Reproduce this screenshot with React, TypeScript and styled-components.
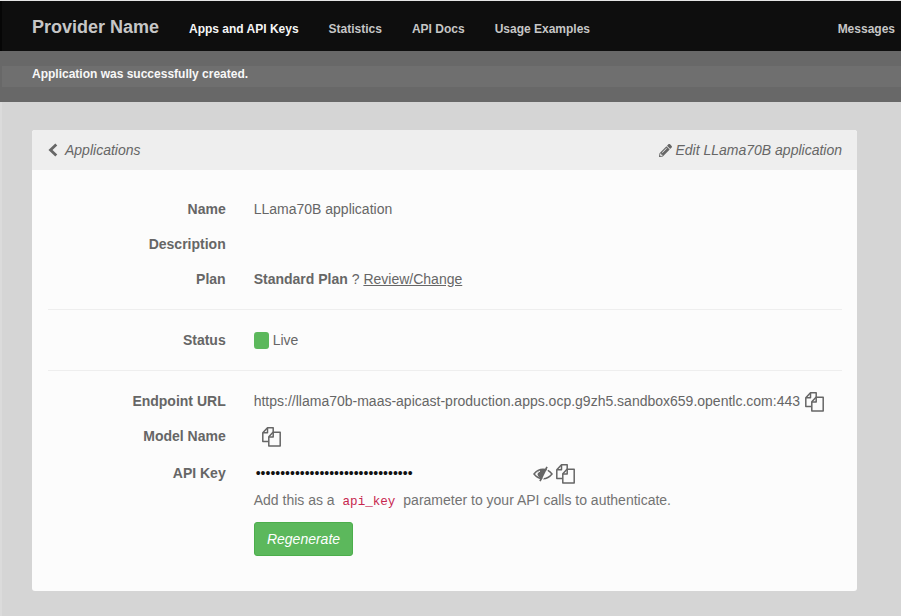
import React from 'react';
import styled, { createGlobalStyle } from 'styled-components';
import { FaPencilAlt } from 'react-icons/fa';

const GlobalStyle = createGlobalStyle`
  html, body {
    margin: 0;
    padding: 0;
    background: #d5d5d5;
    font-family: "Liberation Sans", Arial, sans-serif;
    font-size: 14px;
    color: #666;
  }
`;

/* ── Top bars ── */

const Page = styled.div`
  width: 901px;
  height: 616px;
  overflow: hidden;
  box-sizing: border-box;
  border-top: 1px solid #e4e4e4;
  background: #d5d5d5;
`;

const Navbar = styled.nav`
  height: 50px;
  box-sizing: border-box;
  background: #0e0e0e;
  border-left: 2px solid #060606;
  display: flex;
  align-items: center;
  padding-left: 30px;
`;

const Brand = styled.span`
  font-size: 18px;
  font-weight: 700;
  color: #c6c6c6;
  width: 157px;
  margin-top: 3px;
`;

const NavLinks = styled.div`
  display: flex;
  flex: 1;
  gap: 30px;
  margin-top: 6px;
`;

const NavLink = styled.a<{ $active?: boolean; $right?: boolean }>`
  font-size: 12px;
  font-weight: 700;
  color: ${({ $active }) => ($active ? '#f5f5f5' : '#c6c6c6')};
  margin-left: ${({ $right }) => ($right ? 'auto' : '0')};
  margin-right: ${({ $right }) => ($right ? '6px' : '0')};
`;

const Flash = styled.div`
  height: 51px;
  background: #686868;
  display: flex;
  align-items: center;
`;

const FlashBand = styled.div`
  flex: 1;
  height: 21px;
  margin-left: 2px;
  padding-left: 30px;
  background: #6f6f6f;
  color: #f8f8f8;
  font-size: 12px;
  font-weight: 700;
  line-height: 17px;
`;

/* ── Card ── */

const Main = styled.main`
  height: 514px;
  padding: 28px 44px 0 30px;
  border-left: 2px solid #dbdbdb;
`;

const Card = styled.section`
  background: #fcfcfc;
  border-radius: 3px;
  height: 461px;
`;

const CardHeader = styled.header`
  height: 40px;
  background: #eeeeee;
  border-radius: 3px 3px 0 0;
  display: flex;
  align-items: center;
  justify-content: space-between;
  padding: 0 15px 0 16px;
  font-style: italic;
  color: #666;
`;

const HeaderLink = styled.a`
  display: flex;
  align-items: center;
  gap: 7px;
`;

const EditLink = styled(HeaderLink)`
  gap: 3px;
`;

const CardBody = styled.div`
  padding: 22px 15px 0 16px;
`;

const Section = styled.dl`
  margin: 0;
  padding-bottom: 12px;
  border-bottom: 1px solid #eeeeee;
  margin-bottom: 13px;
`;

const PlainSection = styled(Section)`
  padding-bottom: 0;
  border-bottom: none;
  margin-bottom: 0;
`;

const Row = styled.div<{ $height?: number }>`
  display: grid;
  grid-template-columns: 177.7px 1fr;
  column-gap: 28px;
  align-items: start;
  height: ${({ $height }) => $height ?? 35}px;
  line-height: 35px;
`;

const Term = styled.dt`
  font-weight: 700;
  text-align: right;
`;

const Value = styled.dd`
  margin: 0;
  height: 35px;
  display: flex;
  align-items: center;
  white-space: pre;
`;

const Strong = styled.strong`
  font-weight: 700;
`;

const Underlined = styled.a`
  text-decoration: underline;
`;

const Swatch = styled.span`
  width: 15px;
  height: 17px;
  border-radius: 3px;
  background: #5cb85c;
  margin-right: 4px;
`;

const CopyButton = styled.span<{ $offset?: number }>`
  display: inline-flex;
  margin-left: ${({ $offset }) => $offset ?? 0}px;
  color: #666;
`;

const KeyDots = styled.span`
  width: 277px;
  color: #111;
  padding-left: 2px;
`;

const Hint = styled.p`
  margin: -1px 0 0 205.7px;
  line-height: 20px;
  color: #737373;
`;

const Code = styled.code`
  font-family: "Liberation Mono", monospace;
  font-size: 12.6px;
  color: #c7254e;
  padding: 0 4px;
`;

const RegenerateButton = styled.button`
  display: block;
  margin: 10px 0 0 206px;
  width: 99px;
  height: 34px;
  background: #5cb85c;
  border: 1px solid #4cae4c;
  border-radius: 3px;
  color: #fff;
  font: italic 14px "Liberation Sans", Arial, sans-serif;
  padding: 0;
`;

const BackIcon = () => (
  <svg width="10" height="14" viewBox="0 0 10 14" fill="none" stroke="currentColor" strokeWidth="2.8">
    <path d="M8.300 1.500L2.500 7l5.800 5.500" />
  </svg>
);

const CopyIcon = () => (
  <svg width="19" height="20" viewBox="0 0 19 20" fill="none" stroke="currentColor" strokeWidth="1.5" strokeLinejoin="round">
    <path d="M6.500 14.500H0.800V5.800L5.500 0.800h5.700V5" />
    <path d="M5.500 1v4.800H1" />
    <path d="M6.800 19V9.800L11 5.200h7.200V19z" fill="#fcfcfc" />
    <path d="M11.200 5.400v4.600H7" />
  </svg>
);

const EyeSlashIcon = () => (
  <svg width="20" height="16" viewBox="0 0 20 16" fill="none" stroke="currentColor">
    <path d="M1 8C3.400 5 6.400 3.300 10 3.300S16.600 5 19 8c-2.400 3-5.400 4.700-9 4.700S3.400 11 1 8z" strokeWidth="1.500" />
    <path d="M4.500 8c0-2.700 2.500-4.800 5.500-4.800h3L8 12.600C6 11.600 4.500 9.800 4.500 8z" fill="currentColor" stroke="none" />
    <path d="M15.500 1.500L8.500 15.500" stroke="#fcfcfc" strokeWidth="1.200" />
    <path d="M14 0.800L7 15.200" strokeWidth="1.700" />
    <path d="M3.500 8c1-1.300 2.200-2.300 3.500-2.900" stroke="#fcfcfc" strokeWidth="1" />
  </svg>
);

const App: React.FC = () => (
  <Page>
    <GlobalStyle />
    <Navbar>
      <Brand>Provider Name</Brand>
      <NavLinks>
        <NavLink $active>Apps and API Keys</NavLink>
        <NavLink>Statistics</NavLink>
        <NavLink>API Docs</NavLink>
        <NavLink>Usage Examples</NavLink>
        <NavLink $right>Messages</NavLink>
      </NavLinks>
    </Navbar>
    <Flash>
      <FlashBand>Application was successfully created.</FlashBand>
    </Flash>
    <Main>
      <Card>
        <CardHeader>
          <HeaderLink>
            <BackIcon />
            Applications
          </HeaderLink>
          <EditLink>
            <FaPencilAlt size={13} />
            Edit LLama70B application
          </EditLink>
        </CardHeader>
        <CardBody>
          <Section>
            <Row>
              <Term>Name</Term>
              <Value>LLama70B application</Value>
            </Row>
            <Row>
              <Term>Description</Term>
              <Value />
            </Row>
            <Row>
              <Term>Plan</Term>
              <Value>
                <Strong>Standard Plan</Strong> ? <Underlined>Review/Change</Underlined>
              </Value>
            </Row>
          </Section>
          <Section>
            <Row>
              <Term>Status</Term>
              <Value>
                <Swatch />
                Live
              </Value>
            </Row>
          </Section>
          <PlainSection>
            <Row>
              <Term>Endpoint URL</Term>
              <Value>
                https://llama70b-maas-apicast-production.apps.ocp.g9zh5.sandbox659.opentlc.com:443
                <CopyButton $offset={5}>
                  <CopyIcon />
                </CopyButton>
              </Value>
            </Row>
            <Row $height={37}>
              <Term>Model Name</Term>
              <Value>
                <CopyButton $offset={8}>
                  <CopyIcon />
                </CopyButton>
              </Value>
            </Row>
            <Row>
              <Term>API Key</Term>
              <Value>
                <KeyDots>••••••••••••••••••••••••••••••••</KeyDots>
                <EyeSlashIcon />
                <CopyButton $offset={3}>
                  <CopyIcon />
                </CopyButton>
              </Value>
            </Row>
            <Hint>
              Add this as a <Code>api_key</Code> parameter to your API calls to authenticate.
            </Hint>
            <RegenerateButton>Regenerate</RegenerateButton>
          </PlainSection>
        </CardBody>
      </Card>
    </Main>
  </Page>
);

export default App;
